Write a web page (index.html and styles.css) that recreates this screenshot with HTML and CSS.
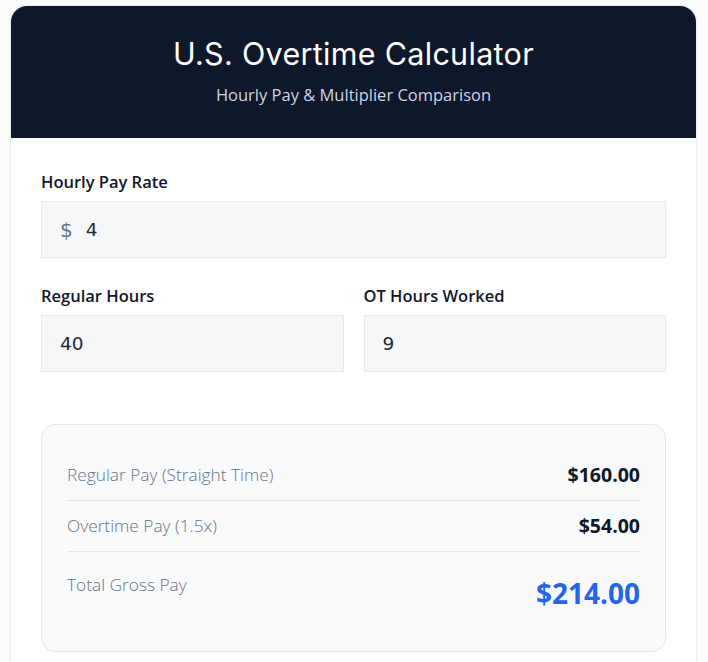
FILE: index.html
```html
<!DOCTYPE html>
<html lang="en">
<head>
<meta charset="utf-8">
<title>U.S. Overtime Calculator</title>
<link rel="stylesheet" href="styles.css">
</head>
<body>
<div class="card">
  <header class="header">
    <h1 class="title">U.S. Overtime Calculator</h1>
    <p class="subtitle">Hourly Pay &amp; Multiplier Comparison</p>
  </header>
  <main class="content">
    <div class="field">
      <label class="label">Hourly Pay Rate</label>
      <div class="input input-prefix"><span class="prefix">$</span><span class="value">4</span></div>
    </div>
    <div class="row-2">
      <div class="field">
        <label class="label">Regular Hours</label>
        <div class="input"><span class="value">40</span></div>
      </div>
      <div class="field">
        <label class="label">OT Hours Worked</label>
        <div class="input"><span class="value">9</span></div>
      </div>
    </div>
    <section class="results">
      <div class="res-row">
        <span class="res-label">Regular Pay (Straight Time)</span>
        <span class="res-value">$160.00</span>
      </div>
      <div class="res-row">
        <span class="res-label">Overtime Pay (1.5x)</span>
        <span class="res-value">$54.00</span>
      </div>
      <div class="res-row res-total">
        <span class="res-label">Total Gross Pay</span>
        <span class="res-value total-value">$214.00</span>
      </div>
    </section>
  </main>
</div>
</body>
</html>
```
FILE: styles.css
```css
* { box-sizing: border-box; }
html, body { margin: 0; padding: 0; }
body {
  background: #fcfcfd;
  padding: 6px 12px 0 11px;
  font-family: "Open Sans", "Noto Sans", sans-serif;
}
.card {
  background: #ffffff;
  border-radius: 16px 16px 0 0;
  box-shadow: 0 0 0 1px #eceef2, 0 2px 6px rgba(15, 23, 42, 0.05);
  overflow: hidden;
  min-height: 700px;
}
.header {
  background: #0f172a;
  height: 132px;
  padding-top: 30px;
  text-align: center;
}
.title {
  margin: 0;
  font-family: "Inter", sans-serif;
  font-weight: 400;
  font-size: 30.5px;
  line-height: 36px;
  color: #ffffff;
  letter-spacing: 0.3px;
}
.subtitle {
  margin: 12px 0 0;
  font-size: 16.5px;
  line-height: 22px;
  color: #cbd5e1;
}
.content {
  padding: 32px 30px 30px;
}
.field {
  display: flex;
  flex-direction: column;
  margin-bottom: 26px;
}
.label {
  font-weight: 600;
  font-size: 16.5px;
  line-height: 24px;
  color: #0f172a;
  margin-bottom: 7px;
}
.input {
  height: 57px;
  background: #f6f7f9;
  border: 1px solid #e8eaee;
  display: flex;
  align-items: center;
  padding: 0 18px;
}
.value {
  font-family: "DejaVu Sans", sans-serif;
  font-size: 18.5px;
  color: #1e293b;
}
.prefix {
  font-family: "DejaVu Sans", sans-serif;
  font-size: 20px;
  color: #64748b;
  margin-right: 13px;
}
.row-2 {
  display: grid;
  grid-template-columns: 1fr 1fr;
  column-gap: 20px;
}
.results {
  margin-top: 26px;
  background: #f8fafc;
  border: 1px solid #e2e8f0;
  border-radius: 14px;
  padding: 25px 25px 25px;
}
.res-row {
  display: flex;
  justify-content: space-between;
  align-items: center;
  padding: 12px 0;
  border-bottom: 1px solid #e2e8f0;
}
.res-label {
  font-weight: 300;
  font-size: 17.3px;
  line-height: 26px;
  color: #64748b;
}
.res-value {
  font-weight: 700;
  font-size: 19.5px;
  line-height: 26px;
  color: #0f172a;
}
.res-total {
  border-bottom: none;
  align-items: flex-start;
  padding: 20px 0 12px;
}
.total-value {
  font-size: 28px;
  line-height: 42px;
  color: #2563eb;
}
```
